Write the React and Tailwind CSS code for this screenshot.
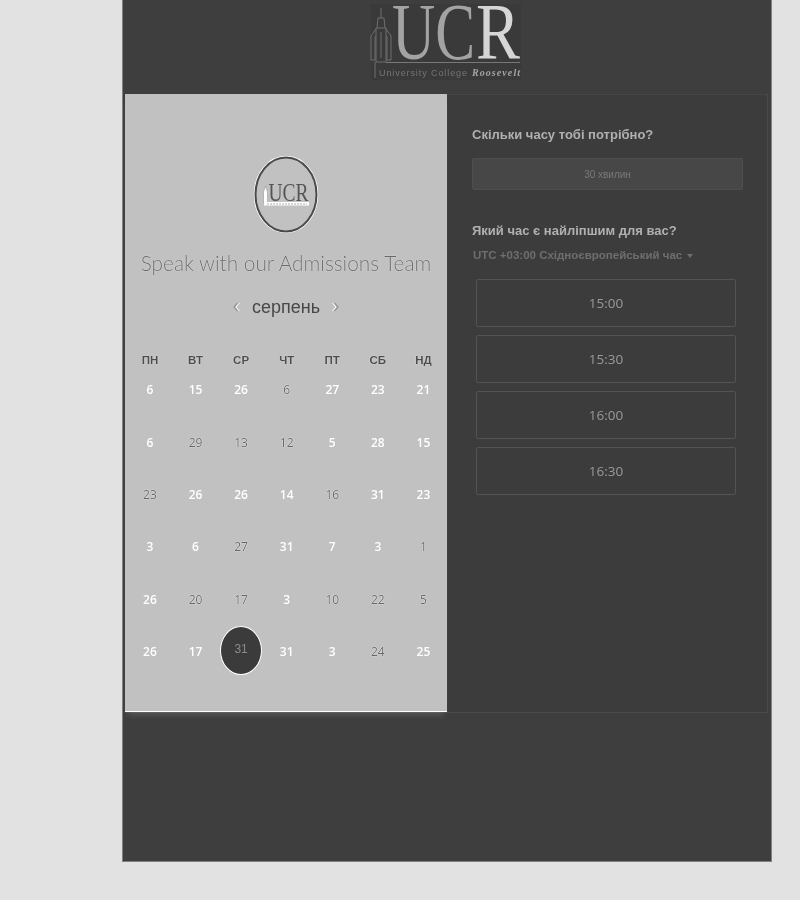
const weeks = [
  [["6",1],["15",1],["26",1],["6",0],["27",1],["23",1],["21",1]],
  [["6",1],["29",0],["13",0],["12",0],["5",1],["28",1],["15",1]],
  [["23",0],["26",1],["26",1],["14",1],["16",0],["31",1],["23",1]],
  [["3",1],["6",1],["27",0],["31",1],["7",1],["3",1],["1",0]],
  [["26",1],["20",0],["17",0],["3",1],["10",0],["22",0],["5",0]],
  [["26",1],["17",1],["31",2],["31",1],["3",1],["24",0],["25",1]],
];
const heads = ["ПН","ВТ","СР","ЧТ","ПТ","СБ","НД"];
const slots = ["15:00","15:30","16:00","16:30"];

function Tower({ color = "#6f6f6f", sw = 1 }) {
  return (
    <g fill="none" stroke={color} strokeWidth={sw}>
      <path d="M382 8 V18 M378 28 L379 18 H385 L386 28" />
      <path d="M377 28 H387 V62 H377 Z" />
      <path d="M372 36 L377 29 M392 36 L387 29" />
      <path d="M372 36 V60 H376 V36 M388 36 V60 H392 V36" />
      <path d="M382 32 V58" />
      <path d="M376 62 V78" />
    </g>
  );
}

function Logo() {
  return (
    <svg width="160" height="92" viewBox="368 0 160 92" className="block">
      <rect x="372" y="4" width="150" height="76" fill="#3a3a3a" />
      <Tower />
      <path d="M387 62.5 H521" stroke="#787878" strokeWidth="1" />
      <text x="393" y="59" fontFamily="'Liberation Serif', serif" fontSize="80" fill="#a3a3a3" textLength="83" lengthAdjust="spacingAndGlyphs">UC</text>
      <text x="477" y="59" fontFamily="'Liberation Serif', serif" fontSize="80" fill="#d6d6d6" textLength="44" lengthAdjust="spacingAndGlyphs">R</text>
      <text x="380" y="76" fontFamily="'Liberation Sans', sans-serif" fontSize="9" fill="#757575" textLength="88" lengthAdjust="spacing">University College</text>
      <text x="473" y="76" fontFamily="'Liberation Serif', serif" fontSize="10" fontStyle="italic" fontWeight="700" fill="#a5a5a5" textLength="48" lengthAdjust="spacing">Roosevelt</text>
    </svg>
  );
}

function Badge() {
  return (
    <svg width="66" height="79" viewBox="0 0 66 79" className="block">
      <ellipse cx="33" cy="39.5" rx="31.5" ry="38" fill="#c1c1c1" stroke="#ffffff" strokeWidth="1.5" />
      <ellipse cx="33" cy="39.5" rx="30.5" ry="37" fill="none" stroke="#4a4a4a" strokeWidth="2" />
      <path d="M10.5 48 V37 L12.5 31 L14.5 37 V48 Z" fill="#ffffff" stroke="#8a8a8a" strokeWidth="0.5" />
      <text x="15.5" y="46" fontFamily="'Liberation Serif', serif" fontSize="26" fill="#555555" textLength="40" lengthAdjust="spacingAndGlyphs">UCR</text>
      <rect x="11" y="47" width="45" height="3.5" fill="#ffffff" />
      <path d="M14 49 H54" stroke="#8a8a8a" strokeWidth="0.7" strokeDasharray="2 1" />
    </svg>
  );
}

function Chevron({ flip }) {
  return (
    <svg width="8" height="12" viewBox="0 0 8 12" className={flip ? "block rotate-180" : "block"}>
      <path d="M5.5 2 L2 6 L5.5 10" fill="none" stroke="#8a8a8a" strokeWidth="1.1" />
      <path d="M7.5 2 L4 6 L7.5 10" fill="none" stroke="#ffffff" strokeWidth="1" />
    </svg>
  );
}

function Day({ v, kind }) {
  if (kind === 2) {
    return (
      <div className="flex h-[52.4px] items-center justify-center">
        <span className="flex h-[49px] w-[42px] -translate-y-[2px] items-center justify-center rounded-[50%] border border-white bg-[#3b3b3b] pb-[3px] text-[12px] text-[#8b8b8b]">
          {v}
        </span>
      </div>
    );
  }
  return (
    <div className="flex h-[52.4px] items-center justify-center">
      <span
        className={
          kind === 1
            ? "text-[12px] font-semibold text-white [font-family:'Open_Sans',sans-serif]"
            : "text-[12px] text-[#666666] [text-shadow:0_0_1px_#ffffff,0_0_1px_#ffffff] [font-family:'Open_Sans',sans-serif]"
        }
      >
        {v}
      </span>
    </div>
  );
}

export default function App() {
  return (
    <div className="min-h-[900px] bg-[#e2e2e2] pl-[122px] grayscale [font-family:'Liberation_Sans',sans-serif]">
      <div className="h-[862px] w-[650px] border-x border-b border-[#808080] bg-[#3e3e3e] px-[2px]">
        <div className="flex h-[92px] items-center justify-center pr-[1px]">
          <Logo />
        </div>
        <div className="mt-[2px] flex h-[619px] w-[643px] border-r border-b border-[#4a4a4a] bg-[#3c3c3c]">
          <div className="relative flex h-[618px] w-[322px] flex-col items-center border-b-[1.5px] border-white bg-[#c1c1c1] shadow-[0_6px_6px_-3px_rgba(255,255,255,0.15)]">
            <div className="mt-[61px]">
              <Badge />
            </div>
            <div className="mt-[13px] whitespace-nowrap text-[20.8px] leading-[32px] text-[#6a6a6a] [text-shadow:0_0_1px_#ffffff] font-light [font-family:'Lato',sans-serif]">
              Speak with our Admissions Team
            </div>
            <div className="mt-[13px] flex h-[30px] items-center gap-[12px]">
              <Chevron />
              <span className="text-[18px] text-[#484848]">серпень</span>
              <Chevron flip />
            </div>
            <div className="mt-[30px] ml-[2.2px] grid w-[319px] grid-cols-7 self-start">
              {heads.map((h) => (
                <div key={h} className="flex h-[18px] items-center justify-center text-[11.5px] font-bold text-[#4d4d4d] [text-shadow:0_0_1px_#ffffff]">
                  {h}
                </div>
              ))}
            </div>
            <div className="mt-[-6px] ml-[2.2px] grid w-[319px] grid-cols-7 self-start">
              {weeks.flat().map(([v, k], i) => (
                <Day key={i} v={v} kind={k} />
              ))}
            </div>
          </div>
          <div className="flex flex-1 flex-col border-t border-[#464646] pt-[30px] pl-[25px]">
            <h2 className="text-[13px] leading-[20px] font-bold text-[#b0b0b0]">Скільки часу тобі потрібно?</h2>
            <div className="mt-[13px] flex h-[32px] w-[271px] items-center justify-center rounded-[2px] border border-[#4e4e4e] bg-[#474747] pt-[1px] text-[10px] text-[#7a7a7a]">
              30 хвилин
            </div>
            <h2 className="mt-[31px] text-[13px] leading-[20px] font-bold text-[#b0b0b0]">Який час є найліпшим для вас?</h2>
            <div className="mt-[5px] ml-[1px] flex h-[20px] items-center gap-[5px] text-[11.5px] font-bold text-[#6e6e6e]">
              UTC +03:00 Східноєвропейський час
              <span className="h-0 w-0 border-x-[3.5px] border-t-[4px] border-x-transparent border-t-[#6e6e6e]"></span>
            </div>
            <div className="mt-[13px] ml-[4px] flex w-[260px] flex-col gap-[8px]">
              {slots.map((s) => (
                <div key={s} className="flex h-[48px] items-center justify-center rounded-[2px] border border-[#535353] text-[13.5px] text-[#9a9a9a] [font-family:'Open_Sans',sans-serif]">
                  {s}
                </div>
              ))}
            </div>
          </div>
        </div>
      </div>
    </div>
  );
}
